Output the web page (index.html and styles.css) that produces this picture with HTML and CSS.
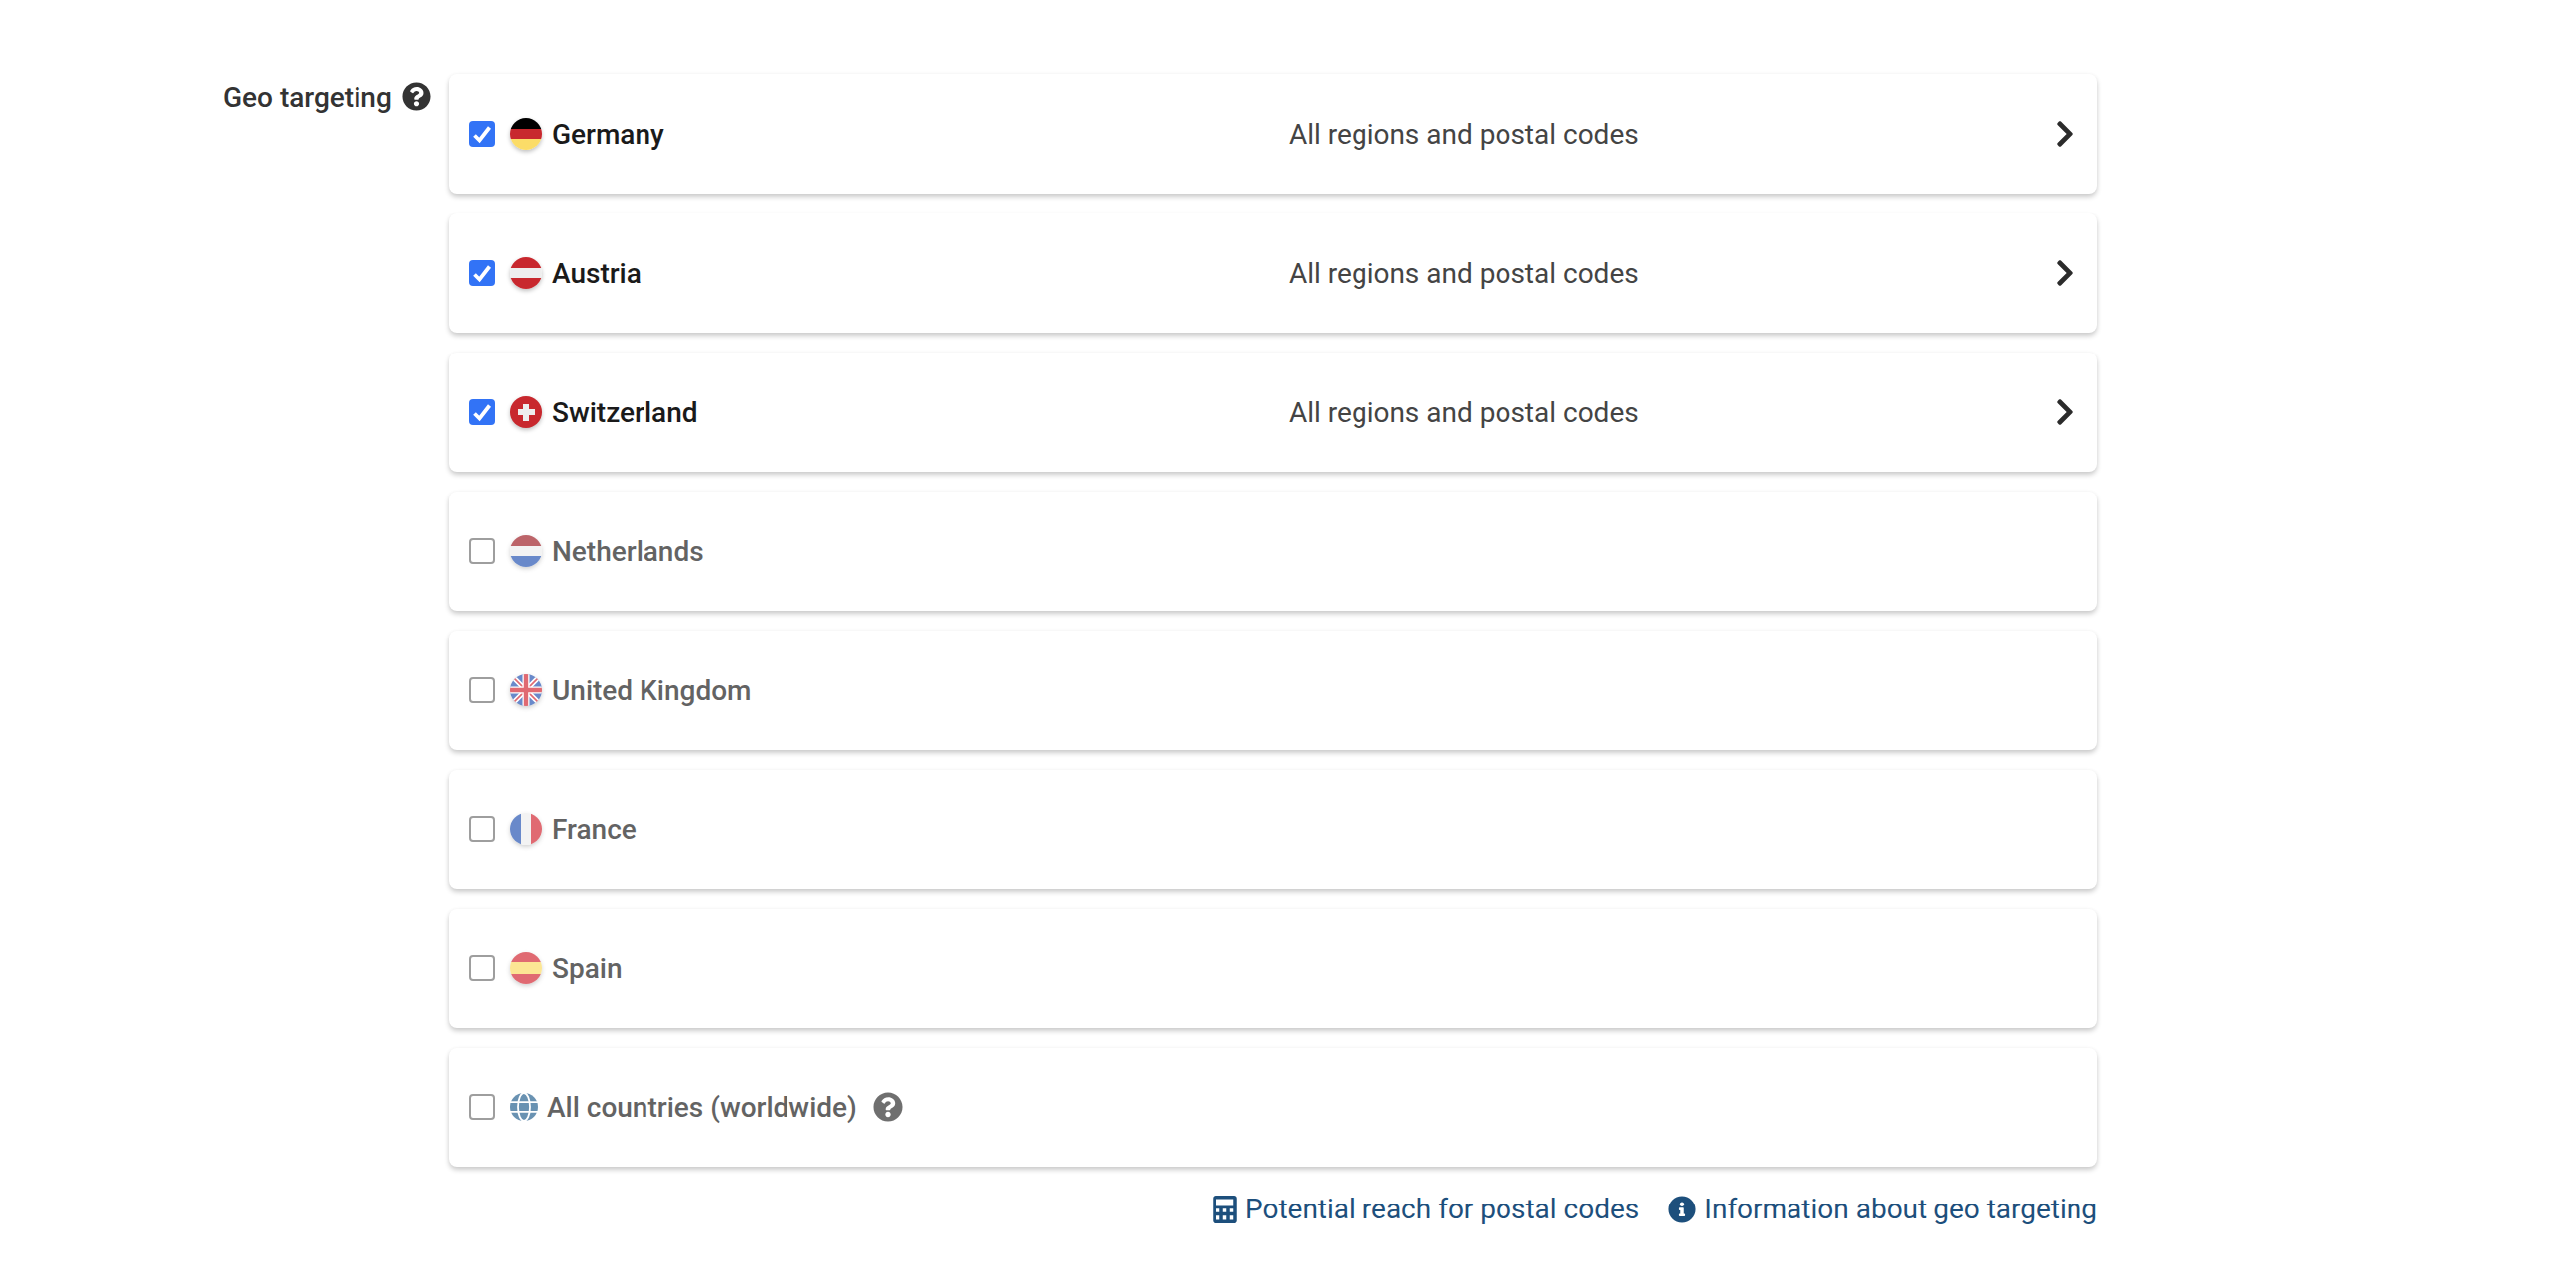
FILE: index.html
```html
<!DOCTYPE html>
<html lang="en">
<head>
    <meta charset="UTF-8" />
    <title>Geo targeting</title>
    <link rel="stylesheet" href="styles.css">
</head>
<body>
    <svg class="defs" width="0" height="0">
        <defs>
            <symbol id="icon-question" viewBox="0 0 512 512">
                <path d="M504 256c0 136.997-111.043 248-248 248S8 392.997 8 256C8 119.083 119.043 8 256 8s248 111.083 248 248zM262.655 90c-54.497 0-89.255 22.957-116.549 63.758-3.536 5.286-2.353 12.415 2.715 16.258l34.699 26.31c5.205 3.947 12.621 3.008 16.665-2.122 17.864-22.658 30.113-35.797 57.303-35.797 20.429 0 45.698 13.148 45.698 32.958 0 14.976-12.363 22.667-32.534 33.976C247.128 238.528 216 254.941 216 296v4c0 6.627 5.373 12 12 12h56c6.627 0 12-5.373 12-12v-1.333c0-28.462 83.186-29.647 83.186-106.667 0-58.002-60.165-102-116.531-102zM256 338c-25.365 0-46 20.635-46 46 0 25.364 20.635 46 46 46s46-20.636 46-46c0-25.365-20.635-46-46-46z"/>
            </symbol>
            <symbol id="icon-chevron" viewBox="0 0 320 512">
                <path d="M285.476 272.971L91.132 467.314c-9.373 9.373-24.569 9.373-33.941 0l-22.667-22.667c-9.357-9.357-9.375-24.522-.04-33.901L188.505 256 34.484 101.255c-9.335-9.379-9.317-24.544.04-33.901l22.667-22.667c9.373-9.373 24.569-9.373 33.941 0L285.475 239.03c9.373 9.372 9.373 24.568.001 33.941z"/>
            </symbol>
        </defs>
    </svg>

    <div class="geo-row">
        <div class="geo-label">
            <span>Geo targeting</span>
            <svg class="help-icon"><use href="#icon-question"/></svg>
        </div>

        <div class="geo-list">
            <div class="country-card active">
                <div class="country">
                    <input type="checkbox" checked />
                    <span class="flag flag-de"></span>
                    <span class="country-name">Germany</span>
                </div>
                <div class="country-scope">All regions and postal codes</div>
                <svg class="chevron"><use href="#icon-chevron"/></svg>
            </div>

            <div class="country-card active">
                <div class="country">
                    <input type="checkbox" checked />
                    <span class="flag flag-at"></span>
                    <span class="country-name">Austria</span>
                </div>
                <div class="country-scope">All regions and postal codes</div>
                <svg class="chevron"><use href="#icon-chevron"/></svg>
            </div>

            <div class="country-card active">
                <div class="country">
                    <input type="checkbox" checked />
                    <span class="flag flag-ch"></span>
                    <span class="country-name">Switzerland</span>
                </div>
                <div class="country-scope">All regions and postal codes</div>
                <svg class="chevron"><use href="#icon-chevron"/></svg>
            </div>

            <div class="country-card">
                <div class="country">
                    <input type="checkbox" />
                    <span class="flag flag-nl"></span>
                    <span class="country-name">Netherlands</span>
                </div>
            </div>

            <div class="country-card">
                <div class="country">
                    <input type="checkbox" />
                    <span class="flag flag-uk">
                        <svg viewBox="0 0 32 32" width="32" height="32">
                            <rect width="32" height="32" fill="#2a58b4"/>
                            <path d="M0 0L32 32M32 0L0 32" stroke="#fff" stroke-width="5"/>
                            <path d="M0 0L32 32M32 0L0 32" stroke="#d32c37" stroke-width="1.6"/>
                            <path d="M16 0V32M0 16H32" stroke="#fff" stroke-width="7"/>
                            <path d="M16 0V32M0 16H32" stroke="#d32c37" stroke-width="4.4"/>
                        </svg>
                    </span>
                    <span class="country-name">United Kingdom</span>
                </div>
            </div>

            <div class="country-card">
                <div class="country">
                    <input type="checkbox" />
                    <span class="flag flag-fr"></span>
                    <span class="country-name">France</span>
                </div>
            </div>

            <div class="country-card">
                <div class="country">
                    <input type="checkbox" />
                    <span class="flag flag-es"></span>
                    <span class="country-name">Spain</span>
                </div>
            </div>

            <div class="country-card">
                <div class="country">
                    <input type="checkbox" />
                    <svg class="globe" viewBox="0 0 28 28">
                        <circle cx="14" cy="14" r="14" fill="#2a6492"/>
                        <ellipse cx="14" cy="14" rx="6" ry="14" fill="none" stroke="#fff" stroke-width="1.8"/>
                        <path d="M0 9.2H28M0 18.8H28" stroke="#fff" stroke-width="1.8"/>
                    </svg>
                    <span class="country-name">All countries (worldwide)</span>
                    <svg class="help-icon help-worldwide"><use href="#icon-question"/></svg>
                </div>
            </div>

            <div class="geo-links">
                <a class="geo-link" href="#">
                    <svg class="calc-icon" viewBox="0 0 448 512">
                        <path fill-rule="evenodd" d="M48 0H400C426 0 448 22 448 48V464C448 490 426 512 400 512H48C22 512 0 490 0 464V48C0 22 22 0 48 0ZM64 64V192H384V64ZM64 240V304H128V240ZM192 240V304H256V240ZM320 240V304H384V240ZM64 368V448H128V368ZM192 368V448H256V368ZM320 368V448H384V368Z"/>
                    </svg>
                    Potential reach for postal codes
                </a>
                <a class="geo-link" href="#">
                    <svg class="info-icon" viewBox="0 0 512 512">
                        <path d="M256 8C119.043 8 8 119.083 8 256c0 136.997 111.043 248 248 248s248-111.003 248-248C504 119.083 392.957 8 256 8zm0 110c23.196 0 42 18.804 42 42s-18.804 42-42 42-42-18.804-42-42 18.804-42 42-42zm56 254c0 6.627-5.373 12-12 12h-88c-6.627 0-12-5.373-12-12v-24c0-6.627 5.373-12 12-12h12v-64h-12c-6.627 0-12-5.373-12-12v-24c0-6.627 5.373-12 12-12h64c6.627 0 12 5.373 12 12v100h12c6.627 0 12 5.373 12 12v24z"/>
                    </svg>
                    Information about geo targeting
                </a>
            </div>
        </div>
    </div>
</body>
</html>
```

FILE: styles.css
```css
html, body {
    margin: 0;
    padding: 0;
    background: #fff;
}

body {
    font-family: Roboto, "Liberation Sans", sans-serif;
    color: #222;
}

.defs {
    display: block;
    height: 0;
}

.geo-row {
    display: flex;
    padding: 75px 0 0 225px;
}

.geo-label {
    width: 227px;
    display: flex;
    align-items: flex-start;
    gap: 10px;
    padding-top: 8px;
    box-sizing: border-box;
    font-size: 28px;
    font-weight: 500;
    line-height: 32px;
    color: #333;
}

.help-icon {
    width: 29px;
    height: 29px;
    fill: #333;
    flex: none;
}

.geo-list {
    width: 1660px;
    display: flex;
    flex-direction: column;
    gap: 20px;
}

.country-card {
    height: 120px;
    box-sizing: border-box;
    padding: 0 20px;
    display: grid;
    grid-template-columns: 826px 1fr auto;
    align-items: center;
    background: #fff;
    border-radius: 8px;
    box-shadow: 0 3px 5px rgba(0, 0, 0, 0.2), 0 0 4px rgba(0, 0, 0, 0.03);
}

.country {
    display: flex;
    align-items: center;
    font-size: 28px;
    font-weight: 500;
    opacity: 0.7;
}

.country-card.active .country {
    opacity: 1;
    color: #1a1a1a;
}

.country input {
    appearance: none;
    -webkit-appearance: none;
    width: 26px;
    height: 26px;
    margin: 0 16px 0 0;
    box-sizing: border-box;
    border: 2px solid #767676;
    border-radius: 4px;
    background: #fff;
    flex: none;
}

.country input:checked {
    border: none;
    background: #3273f6 url("data:image/svg+xml,%3Csvg xmlns='http://www.w3.org/2000/svg' viewBox='0 0 26 26'%3E%3Cpath d='M5.5 14.5L10.5 19.5L20.5 6.5' fill='none' stroke='%23fff' stroke-width='3.8'/%3E%3C/svg%3E") center / 26px no-repeat;
}

.flag {
    width: 32px;
    height: 32px;
    margin-right: 10px;
    border-radius: 50%;
    overflow: hidden;
    flex: none;
    box-shadow: 0 2px 4px rgba(0, 0, 0, 0.25);
}

.flag svg {
    display: block;
}

.flag-de { background: linear-gradient(#000 33%, #c8282e 33% 67%, #fbdc68 67%); }
.flag-at { background: linear-gradient(#c8282e 33%, #eee 33% 67%, #c8282e 67%); }
.flag-nl { background: linear-gradient(#a0232b 33%, #eee 33% 67%, #2a58b4 67%); }
.flag-fr { background: linear-gradient(90deg, #2a58b4 33%, #eee 33% 67%, #d32c37 67%); }
.flag-es { background: linear-gradient(#d32c37 32%, #fbdc68 32% 68%, #d32c37 68%); }
.flag-ch {
    background:
        linear-gradient(#eee, #eee) center / 6px 17px no-repeat,
        linear-gradient(#eee, #eee) center / 17px 6px no-repeat,
        #c8282e;
}

.globe {
    width: 28px;
    height: 28px;
    margin-right: 9px;
    flex: none;
}

.help-worldwide {
    width: 30px;
    height: 30px;
    margin-left: 16px;
}

.country-scope {
    font-size: 28px;
    color: #444;
}

.chevron {
    width: 20px;
    height: 30px;
    fill: #2b2b2b;
    margin-right: 3px;
}

.geo-links {
    display: flex;
    justify-content: flex-end;
    gap: 30px;
    margin-top: 5px;
}

.geo-link {
    display: flex;
    align-items: center;
    gap: 8px;
    font-size: 28px;
    line-height: 36px;
    color: #1d4f7c;
    text-decoration: none;
}

.calc-icon {
    width: 25px;
    height: 28px;
    fill: #1d4f7c;
}

.info-icon {
    width: 28px;
    height: 28px;
    fill: #1d4f7c;
}
```
